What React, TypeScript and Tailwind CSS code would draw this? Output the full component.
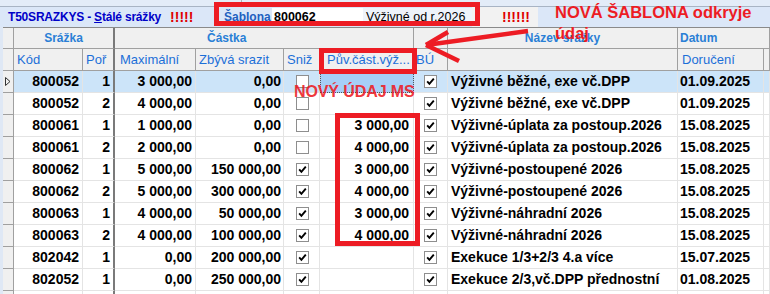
import React from 'react';

type Row = {
  kod: string;
  por: string;
  max: string;
  zb: string;
  sniz: boolean;
  puv: string;
  nazev: string;
  dor: string;
};

const ROWS: Row[] = [
  { kod: '800052', por: '1', max: '3 000,00', zb: '0,00', sniz: false, puv: '', nazev: 'Výživné běžné, exe vč.DPP', dor: '01.09.2025' },
  { kod: '800052', por: '2', max: '4 000,00', zb: '0,00', sniz: false, puv: '', nazev: 'Výživné běžné, exe vč.DPP', dor: '01.09.2025' },
  { kod: '800061', por: '1', max: '1 000,00', zb: '0,00', sniz: false, puv: '3 000,00', nazev: 'Výživné-úplata za postoup.2026', dor: '15.08.2025' },
  { kod: '800061', por: '2', max: '2 000,00', zb: '0,00', sniz: false, puv: '4 000,00', nazev: 'Výživné-úplata za postoup.2026', dor: '15.08.2025' },
  { kod: '800062', por: '1', max: '5 000,00', zb: '150 000,00', sniz: true, puv: '3 000,00', nazev: 'Výživné-postoupené 2026', dor: '15.08.2025' },
  { kod: '800062', por: '2', max: '5 000,00', zb: '300 000,00', sniz: true, puv: '4 000,00', nazev: 'Výživné-postoupené 2026', dor: '15.08.2025' },
  { kod: '800063', por: '1', max: '4 000,00', zb: '50 000,00', sniz: true, puv: '3 000,00', nazev: 'Výživné-náhradní 2026', dor: '15.08.2025' },
  { kod: '800063', por: '2', max: '4 000,00', zb: '100 000,00', sniz: true, puv: '4 000,00', nazev: 'Výživné-náhradní 2026', dor: '15.08.2025' },
  { kod: '802042', por: '1', max: '0,00', zb: '200 000,00', sniz: true, puv: '', nazev: 'Exekuce 1/3+2/3 4.a více', dor: '15.07.2025' },
  { kod: '802052', por: '1', max: '0,00', zb: '250 000,00', sniz: true, puv: '', nazev: 'Exekuce 2/3,vč.DPP přednostní', dor: '01.08.2025' },
];

function Check({ on }: { on: boolean }) {
  return (
    <span className="flex h-[13px] w-[13px] items-center justify-center border border-[#8e8e8e] bg-white">
      {on && (
        <svg width="11" height="11" viewBox="0 0 11 11">
          <path d="M2.2 5.4 L4.4 7.8 L8.8 2.6" fill="none" stroke="#000" strokeWidth="1.9" />
        </svg>
      )}
    </span>
  );
}

const hd = 'flex h-full items-center border-r border-b border-[#a0a0a0] bg-[#f0f0f0]';
const cell = 'flex h-full items-center border-r border-b border-[#e4e4e4]';

function DataRow({ r, sel }: { r?: Row; sel?: boolean }) {
  const bg = sel ? 'bg-[#cce4f9]' : 'bg-white';
  return (
    <div className={`flex h-[22px] text-[14px] font-bold text-black ${bg}`}>
      <div className="flex h-full w-[11px] items-center justify-center border-r border-b border-[#a0a0a0] bg-[#f0f0f0]">
        {sel && (
          <svg width="6" height="9" viewBox="0 0 6 9">
            <path d="M0.5 0.5 L5 4.5 L0.5 8.5 Z" fill="none" stroke="#333" strokeWidth="1" />
          </svg>
        )}
      </div>
      <div className={`${cell} w-[69px] justify-end pr-[3px]`}>{r?.kod}</div>
      <div className="flex h-full w-[32px] items-center justify-end border-r-2 border-b border-r-[#7a7a7a] border-b-[#e4e4e4] pr-[3px]">{r?.por}</div>
      <div className={`${cell} w-[81px] justify-end pr-[3px]`}>{r?.max}</div>
      <div className={`${cell} w-[88px] justify-end pr-[2px]`}>{r?.zb}</div>
      <div className={`${cell} w-[36px] justify-center pl-[2px]`}>{r && <Check on={r.sniz} />}</div>
      {sel ? (
        <div className="flex h-full w-[94px] items-center justify-end border border-dotted border-[#555] bg-[#a6cff7] pr-[4px]">{r?.puv}</div>
      ) : (
        <div className={`${cell} w-[94px] justify-end pr-[4px]`}>{r?.puv}</div>
      )}
      <div className={`${cell} w-[34px] justify-center`}>{r && <Check on />}</div>
      <div className={`${cell} w-[230px] whitespace-nowrap pl-[3px]`}>{r?.nazev}</div>
      <div className={`${cell} w-[86px] pl-[2px]`}>{r?.dor}</div>
      <div className={`${cell} flex-1`} />
    </div>
  );
}

export default function App() {
  return (
    <div
      className="relative h-[294px] w-[770px] overflow-hidden bg-white"
      style={{ fontFamily: '"Liberation Sans", Arial, sans-serif' }}
    >
      {/* horní proužek */}
      <div className="flex h-[7px] border-b border-[#a8b4c4] bg-[#e3ecf8]">
        <div className="w-[242px] border-r border-[#b0b0b0]" />
      </div>

      {/* titulek + šablona */}
      <div className="flex h-[20px] items-center bg-[#dbe7f8]">
        <div className="flex w-[224px] items-center pl-[8px]">
          <span className="text-[12px] font-bold tracking-[-0.2px] text-[#0000c8]">
            T50SRAZKYS - <span className="underline">S</span>tálé srážky
          </span>
          <span className="ml-[9px] text-[14px] font-bold text-[#e00000]">!!!!!</span>
        </div>
        <span className="w-[48px] text-[12px] font-bold text-[#2160c0]">
          Š<span className="underline">a</span>blona
        </span>
        <div className="flex h-[18px] w-[91px] items-center bg-white pl-[2px] text-[12.5px] font-bold text-black">800062</div>
        <div className="flex h-[18px] w-[109px] items-center bg-[#eef3fa] pl-[3px] text-[12.5px] text-black">Výživné od r.2026</div>
        <div className="flex h-full w-[66px] items-center justify-end bg-[#f2f2f2] pr-[8px] text-[14px] font-bold text-[#e00000]">
          !!!!!!
        </div>
        <div className="h-full flex-1" />
      </div>

      <div className="bg-[#dfe8f5] pl-[3px]">
        {/* hlavička 1 */}
        <div className="flex h-[22px] border-t border-[#8a8a8a] text-[12px] font-bold text-[#2a7fd6]">
          <div className={`${hd} w-[11px]`} />
          <div className="flex h-full w-[101px] items-center justify-center border-r-2 border-b border-r-[#7a7a7a] border-b-[#a0a0a0] bg-[#f0f0f0]">Srážka</div>
          <div className={`${hd} w-[299px] pl-[92px]`}>Částka</div>
          <div className={`${hd} w-[34px]`} />
          <div className={`${hd} w-[230px] justify-center`}>Název srážky</div>
          <div className={`${hd} flex-1 pl-[2px]`}>Datum</div>
        </div>
        {/* hlavička 2 */}
        <div className="flex h-[22px] text-[13px] text-[#1c6fd8]">
          <div className={`${hd} w-[11px]`} />
          <div className={`${hd} w-[69px] pl-[3px]`}>Kód</div>
          <div className="flex h-full w-[32px] items-center border-r-2 border-b border-r-[#7a7a7a] border-b-[#a0a0a0] bg-[#f0f0f0] pl-[3px]">Poř</div>
          <div className={`${hd} w-[81px] pl-[5px]`}>Maximální</div>
          <div className={`${hd} w-[88px] pl-[3px]`}>Zbývá srazit</div>
          <div className={`${hd} w-[36px] pl-[3px]`}>Sniž</div>
          <div className={`${hd} w-[94px] pl-[7px]`}>Pův.část.výž...</div>
          <div className={`${hd} w-[34px] pl-[2px]`}>BÚ</div>
          <div className={`${hd} w-[230px]`} />
          <div className={`${hd} w-[86px] pl-[4px]`}>Doručení</div>
          <div className={`${hd} flex-1`} />
        </div>

        {ROWS.map((r, i) => (
          <DataRow key={i} r={r} sel={i === 0} />
        ))}
        <DataRow />
      </div>

      {/* anotace */}
      <div className="absolute left-[214px] top-[2px] h-[24px] w-[266px] border-[5px] border-[#ed1c24]" />
      <div className="absolute left-[319px] top-[48px] h-[26px] w-[98px] border-[5px] border-[#ed1c24]" />
      <div className="absolute left-[335px] top-[113px] h-[133px] w-[85px] border-[5px] border-[#ed1c24]" />
      <div className="absolute left-[294px] top-[82px] whitespace-nowrap text-[16px] font-bold leading-[20px] tracking-[-0.1px] text-[#ed1c24]/90">
        NOVÝ ÚDAJ MS
      </div>
      <div className="absolute left-[555px] top-[2px] text-[16.5px] font-bold leading-[21px] text-[#ed1c24]">
        NOVÁ ŠABLONA odkryje
        <br />
        údaj
      </div>
      <svg className="pointer-events-none absolute left-0 top-0" width="770" height="294">
        <g stroke="#ed1c24" strokeWidth="4.5" strokeLinecap="butt" fill="none">
          <line x1="528" y1="31" x2="426" y2="45" />
          <line x1="426" y1="45" x2="448" y2="32" />
          <line x1="426" y1="45" x2="459" y2="61" />
        </g>
      </svg>
    </div>
  );
}
